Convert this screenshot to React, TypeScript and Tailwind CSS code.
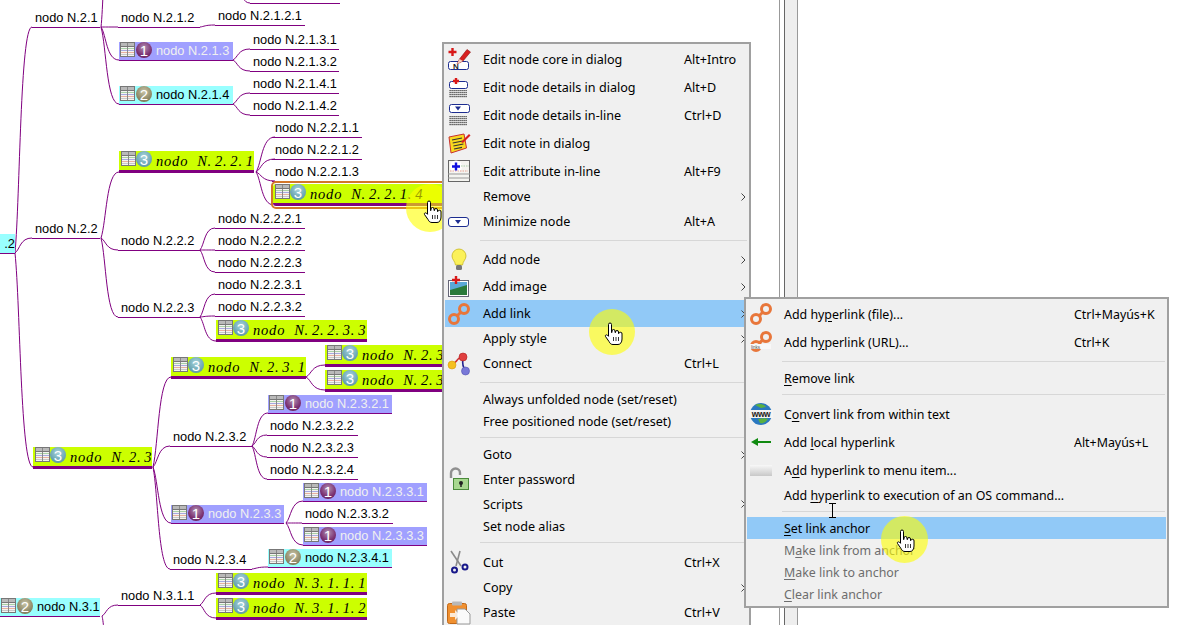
import React from 'react'

type Kind = 'plain' | 'blue' | 'cyan' | 'lime'
type MapNode = { x: number; y: number; w: number; text: string; kind: Kind }

// y is the top of the underline of each node
const nodes: MapNode[] = [
  { x: 250, y: 3, w: 90, text: '', kind: 'plain' },
  { x: 32, y: 27, w: 68, text: 'nodo N.2.1', kind: 'plain' },
  { x: 118, y: 27, w: 82, text: 'nodo N.2.1.2', kind: 'plain' },
  { x: 215, y: 25, w: 90, text: 'nodo N.2.1.2.1', kind: 'plain' },
  { x: 119, y: 60, w: 114, text: 'nodo N.2.1.3', kind: 'blue' },
  { x: 250, y: 49, w: 89, text: 'nodo N.2.1.3.1', kind: 'plain' },
  { x: 250, y: 71, w: 89, text: 'nodo N.2.1.3.2', kind: 'plain' },
  { x: 119, y: 104, w: 114, text: 'nodo N.2.1.4', kind: 'cyan' },
  { x: 250, y: 93, w: 89, text: 'nodo N.2.1.4.1', kind: 'plain' },
  { x: 250, y: 115, w: 89, text: 'nodo N.2.1.4.2', kind: 'plain' },
  { x: 119, y: 170, w: 135, text: 'nodo N. 2. 2. 1', kind: 'lime' },
  { x: 272, y: 137, w: 90, text: 'nodo N.2.2.1.1', kind: 'plain' },
  { x: 272, y: 159, w: 90, text: 'nodo N.2.2.1.2', kind: 'plain' },
  { x: 272, y: 181, w: 90, text: 'nodo N.2.2.1.3', kind: 'plain' },
  { x: 32, y: 238, w: 68, text: 'nodo N.2.2', kind: 'plain' },
  { x: 118, y: 250, w: 82, text: 'nodo N.2.2.2', kind: 'plain' },
  { x: 215, y: 228, w: 90, text: 'nodo N.2.2.2.1', kind: 'plain' },
  { x: 215, y: 250, w: 90, text: 'nodo N.2.2.2.2', kind: 'plain' },
  { x: 215, y: 272, w: 90, text: 'nodo N.2.2.2.3', kind: 'plain' },
  { x: 118, y: 317, w: 82, text: 'nodo N.2.2.3', kind: 'plain' },
  { x: 215, y: 294, w: 90, text: 'nodo N.2.2.3.1', kind: 'plain' },
  { x: 215, y: 316, w: 90, text: 'nodo N.2.2.3.2', kind: 'plain' },
  { x: 216, y: 339, w: 151, text: 'nodo N. 2. 2. 3. 3', kind: 'lime' },
  { x: 171, y: 376, w: 135, text: 'nodo N. 2. 3. 1', kind: 'lime' },
  { x: 325, y: 364, w: 151, text: 'nodo N. 2. 3. 1. 1', kind: 'lime' },
  { x: 325, y: 389, w: 151, text: 'nodo N. 2. 3. 1. 2', kind: 'lime' },
  { x: 33, y: 466, w: 119, text: 'nodo N. 2. 3', kind: 'lime' },
  { x: 170, y: 446, w: 82, text: 'nodo N.2.3.2', kind: 'plain' },
  { x: 268, y: 413, w: 124, text: 'nodo N.2.3.2.1', kind: 'blue' },
  { x: 267, y: 435, w: 91, text: 'nodo N.2.3.2.2', kind: 'plain' },
  { x: 267, y: 457, w: 91, text: 'nodo N.2.3.2.3', kind: 'plain' },
  { x: 267, y: 479, w: 91, text: 'nodo N.2.3.2.4', kind: 'plain' },
  { x: 171, y: 523, w: 113, text: 'nodo N.2.3.3', kind: 'blue' },
  { x: 303, y: 501, w: 124, text: 'nodo N.2.3.3.1', kind: 'blue' },
  { x: 302, y: 523, w: 91, text: 'nodo N.2.3.3.2', kind: 'plain' },
  { x: 303, y: 545, w: 124, text: 'nodo N.2.3.3.3', kind: 'blue' },
  { x: 170, y: 569, w: 82, text: 'nodo N.2.3.4', kind: 'plain' },
  { x: 268, y: 567, w: 124, text: 'nodo N.2.3.4.1', kind: 'cyan' },
  { x: 0, y: 616, w: 100, text: 'nodo N.3.1', kind: 'cyan' },
  { x: 118, y: 605, w: 82, text: 'nodo N.3.1.1', kind: 'plain' },
  { x: 216, y: 592, w: 151, text: 'nodo N. 3. 1. 1. 1', kind: 'lime' },
  { x: 216, y: 617, w: 151, text: 'nodo N. 3. 1. 1. 2', kind: 'lime' },
]

const edges: number[][] = [
  [15, 253, 32, 27], [15, 253, 32, 238], [15, 253, 33, 467],
  [101, 27, 108, -40], [101, 27, 118, 27], [101, 27, 119, 60], [101, 27, 119, 104],
  [240, -8, 250, 3],
  [200, 27, 215, 25],
  [233, 60, 250, 49], [233, 60, 250, 71],
  [233, 104, 250, 93], [233, 104, 250, 115],
  [101, 238, 119, 172], [101, 238, 118, 250], [101, 238, 118, 317],
  [256, 172, 275, 137], [256, 172, 275, 159], [256, 172, 275, 181], [256, 172, 274, 205],
  [200, 250, 215, 228], [200, 250, 215, 250], [200, 250, 215, 272],
  [200, 317, 215, 294], [200, 317, 215, 316], [200, 317, 216, 341],
  [153, 467, 171, 377], [153, 467, 170, 446], [153, 467, 171, 523], [153, 467, 170, 569],
  [306, 377, 325, 365], [306, 377, 325, 390],
  [252, 446, 268, 413], [252, 446, 267, 435], [252, 446, 267, 457], [252, 446, 267, 479],
  [286, 523, 303, 501], [286, 523, 302, 523], [286, 523, 303, 545],
  [252, 569, 268, 567],
  [102, 616, 118, 605], [102, 616, 108, 640],
  [200, 605, 216, 593], [200, 605, 216, 618],
]

const TableIcon = () => (
  <svg width="15" height="15" viewBox="0 0 15 15" className="shrink-0">
    <rect x="0.5" y="0.5" width="14" height="14" fill="#f4f4f0" stroke="#777" />
    <rect x="1" y="1" width="13" height="3" fill="#b9b9b9" />
    <path d="M1 6.5h13" stroke="#a8d0a8" />
    <path d="M1 8.5h13" stroke="#a8a8e0" />
    <path d="M1 10.5h13" stroke="#e8b0a0" />
    <path d="M1 12.5h13" stroke="#c8c8c8" />
    <path d="M7.5 1v13" stroke="#888" />
    <path d="M1 4.5h13" stroke="#777" />
  </svg>
)

const Badge = ({ n }: { n: number }) => {
  const color =
    n === 1
      ? 'bg-[radial-gradient(circle_at_50%_35%,#b090b4,#7a2f70_60%,#5c1f58)]'
      : n === 2
        ? 'bg-[radial-gradient(circle_at_50%_35%,#c8c4a8,#8f8a68_60%,#6e6a4c)]'
        : 'bg-[radial-gradient(circle_at_50%_35%,#a8d4dc,#6ca6b4_60%,#4c8a98)]'
  return (
    <span className={`flex h-[16px] w-[16px] shrink-0 items-center justify-center rounded-full text-[15px] leading-none text-white font-['Liberation_Sans',sans-serif] ${color}`}>
      {n}
    </span>
  )
}

const NodeLabel = ({ kind, text }: { kind: Kind; text: string }) => {
  if (kind === 'lime') {
    // "nodo" stands further from the rest of the label than the numbers do from each other
    const [head, ...rest] = text.split(' ')
    return (
      <div className="flex h-[19px] items-start overflow-hidden whitespace-nowrap bg-[#ccff00] pl-[2px]">
        <TableIcon />
        <Badge n={3} />
        <span className="ml-[4px] mt-[1px] font-['Liberation_Serif',serif] text-[14.5px] italic leading-[18px] tracking-[0.8px] [word-spacing:-1.5px] text-black">
          <span className="mr-[6px]">{head}</span> {rest.join(' ')}
        </span>
      </div>
    )
  }
  const blue = kind === 'blue'
  return (
    <div className={`flex items-start gap-[1px] pl-[1px] h-[18px] overflow-hidden whitespace-nowrap ${blue ? 'bg-[#a0a0ff]' : 'bg-[#99ffff]'}`}>
      <TableIcon />
      <Badge n={blue ? 1 : 2} />
      <span className={`ml-[3px] font-['Liberation_Sans',sans-serif] text-[12.8px] leading-[18px] ${blue ? 'text-[#f0f0f0]' : 'text-black'}`}>{text}</span>
    </div>
  )
}

const MapNodeBox = ({ node }: { node: MapNode }) => {
  const { x, y, w, text, kind } = node
  const thick = kind === 'lime'
  // the box ends on the underline, so it is placed by its bottom edge
  const bottom = 625 - y - (thick ? 3 : 1)
  return (
    <div className="absolute" style={{ left: x, bottom, width: w }}>
      {kind === 'plain' ? (
        <div className="h-[19px] whitespace-nowrap pl-[3px] font-['Liberation_Sans',sans-serif] text-[12.8px] leading-[19px] text-black">{text}</div>
      ) : (
        <NodeLabel kind={kind} text={text} />
      )}
      <div className={thick ? 'h-[3px] bg-[#800080]' : 'h-[1px] bg-[#800080]'} />
    </div>
  )
}

const Canvas = () => (
  <div className="relative h-[625px] w-[779px] shrink-0 overflow-hidden bg-white">
    <svg width="779" height="625" className="absolute inset-0">
      {edges.map(([a, b, c, d], i) => {
        const dx = c - a
        const dy = d - b
        return (
          <path
            key={i}
            d={`M${a} ${b}C${a + dx * 0.3} ${b + dy * 0.25} ${a + dx * 0.3} ${d} ${c} ${d}`}
            fill="none"
            stroke="#800080"
            strokeWidth="1"
          />
        )
      })}
    </svg>
    {/* cut off end of nodo N.2 at the left edge */}
    <div className="absolute left-0 top-[234px] h-[19px] w-[15px] bg-[#99ffff] text-right font-['Liberation_Sans',sans-serif] text-[12.8px] leading-[19px] text-black">.2</div>
    <div className="absolute left-0 top-[253px] h-[1px] w-[15px] bg-[#800080]" />
    {nodes.map((n) => (
      <MapNodeBox key={n.text + n.y + n.x} node={n} />
    ))}
    {/* selected node */}
    <div className="absolute left-[271px] top-[181px] h-[28px] w-[190px] rounded-[5px] border-2 border-[#d2772a] bg-white pt-[1px]">
      <div className="overflow-hidden rounded-l-[3px]">
        <NodeLabel kind="lime" text="nodo N. 2. 2. 1. 4" />
        <div className="h-[3px] bg-[#800080]" />
      </div>
    </div>
  </div>
)

// ---- menu icons ----
const PlusMark = ({ x, y, s = 3 }: { x: number; y: number; s?: number }) => (
  <path d={`M${x - s} ${y}h${s * 2}M${x} ${y - s}v${s * 2}`} stroke="#d81818" strokeWidth="2.4" />
)
const Dots = ({ y, rows }: { y: number; rows: number }) => (
  <g fill="#333">
    {Array.from({ length: rows }).flatMap((_, r) =>
      Array.from({ length: 9 }).map((_, c) => <rect key={`${r}-${c}`} x={2.5 + c * 2} y={y + r * 2} width="1.2" height="1.2" />),
    )}
  </g>
)

const IconEditCore = () => (
  <svg width="24" height="24" viewBox="0 0 24 24">
    <rect x="1.5" y="14.5" width="20" height="8" rx="2" fill="#fff" stroke="#1c2c90" />
    <text x="6" y="22" fontSize="8" fontWeight="700" fontFamily="Liberation Sans" fill="#222">N</text>
    <PlusMark x={5.5} y={5} s={4} />
    <path d="M10 17l2.5-5L20 2.5l3.5 2.5L16 14z" fill="#d82020" stroke="#8a1010" strokeWidth="0.6" />
    <path d="M10 17l2.5-5 3.5 2z" fill="#f0d0c0" />
  </svg>
)
const IconDetailsDialog = () => (
  <svg width="24" height="24" viewBox="0 0 24 24">
    <rect x="2.5" y="6.5" width="18" height="7" rx="2" fill="#fff" stroke="#1c2c90" />
    <PlusMark x={9} y={6} />
    <Dots y={15} rows={4} />
  </svg>
)
const IconDetailsInline = () => (
  <svg width="24" height="24" viewBox="0 0 24 24">
    <rect x="2.5" y="1.5" width="20" height="8" rx="2" fill="#fff" stroke="#1c2c90" />
    <path d="M8 3.5h6l-3 4z" fill="#1c2c90" />
    <Dots y={13} rows={5} />
  </svg>
)
const IconNote = () => (
  <svg width="24" height="24" viewBox="0 0 24 24">
    <path d="M2 6l15-3 2.5 14L4 22z" fill="#f8d820" stroke="#c83030" />
    <path d="M5 9l10-2M5.7 12l10-2M6.4 15l10-2M7 18l8-1.6" stroke="#333" strokeWidth="1.2" />
    <path d="M14 11L22 3l1.5 1.5L16 12z" fill="#d82020" />
  </svg>
)
const IconAttr = () => (
  <svg width="24" height="24" viewBox="0 0 24 24">
    <rect x="1.5" y="1.5" width="21" height="21" fill="#f4f4f0" stroke="#666" />
    <path d="M1 15h22M1 19h22" stroke="#999" />
    <circle cx="9" cy="7.5" r="6" fill="#fff" />
    <path d="M14 7h8" stroke="#a8d0a8" strokeDasharray="1.5 1" />
    <path d="M3 12h18" stroke="#e8a090" strokeDasharray="1.5 1" />
    <path d="M5 7.5h8M9 3.5v8" stroke="#1010e0" strokeWidth="2.4" />
  </svg>
)
const IconMinimize = () => (
  <svg width="24" height="24" viewBox="0 0 24 24">
    <rect x="1.5" y="7.5" width="20" height="9" rx="2.5" fill="#fff" stroke="#1c2c90" />
    <path d="M8 10h6l-3 4z" fill="#1c2c90" />
  </svg>
)
const IconBulb = () => (
  <svg width="24" height="24" viewBox="0 0 24 24">
    <path d="M12 1a7 7 0 0 0-7 7c0 3.5 3 5 3.5 9h7c.5-4 3.500-5.500 3.500-9a7 7 0 0 0-7-7z" fill="#fbf15a" stroke="#c8b820" strokeWidth="0.8" />
    <rect x="9" y="17" width="6" height="5" rx="1.5" fill="#777" />
  </svg>
)
const IconImage = () => (
  <svg width="24" height="24" viewBox="0 0 24 24">
    <rect x="1.5" y="5.5" width="20" height="16" fill="#fff" stroke="#667" />
    <path d="M3 7h17v8H3z" fill="#5aa8d8" />
    <path d="M3 15l7-2 10-3v10H3z" fill="#2a7a3a" />
    <PlusMark x={9} y={5} s={4} />
  </svg>
)
const IconLink = () => (
  <svg width="24" height="24" viewBox="0 0 24 24" fill="none" stroke="#e8763a" strokeWidth="3">
    <circle cx="17" cy="7" r="4.500" />
    <circle cx="7" cy="17" r="4.500" />
    <path d="M10 14l4-4" />
  </svg>
)
const IconLinkUrl = () => (
  <svg width="24" height="24" viewBox="0 0 24 24" fill="none" stroke="#e8763a" strokeWidth="3">
    <circle cx="17" cy="7" r="4.500" />
    <circle cx="7" cy="16" r="4.500" />
    <path d="M10 13l4-3" />
    <rect x="1" y="14" width="21" height="5" fill="#f8f8f8" stroke="none" />
    <text x="2" y="18.500" fontSize="4.500" fill="#555" stroke="none" fontFamily="Liberation Sans">links</text>
  </svg>
)
const IconConnect = () => (
  <svg width="24" height="24" viewBox="0 0 24 24">
    <path d="M5 12c5 0 4-7 11-7" stroke="#d03030" fill="none" strokeWidth="1.6" />
    <path d="M16 6c-1 6 0 10 3 13" stroke="#202090" fill="none" strokeWidth="1.6" />
    <circle cx="5" cy="13" r="4" fill="#f4c020" stroke="#d89810" strokeWidth="0.6" />
    <circle cx="16" cy="5" r="4" fill="#e04040" stroke="#b02020" strokeWidth="0.6" />
    <circle cx="18.500" cy="19" r="4" fill="#7878d8" stroke="#5050b0" strokeWidth="0.6" />
  </svg>
)
const IconLock = () => (
  <svg width="24" height="24" viewBox="0 0 24 24">
    <path d="M4 11V6a4.500 4.500 0 0 1 9 0v2" fill="none" stroke="#909090" strokeWidth="2.400" />
    <rect x="6.500" y="11.500" width="15" height="11" fill="#a8d890" stroke="#4a8a3a" />
    <circle cx="14" cy="16" r="2" fill="#222" />
    <path d="M14 16v4" stroke="#222" strokeWidth="1.500" />
  </svg>
)
const IconCut = () => (
  <svg width="24" height="24" viewBox="0 0 24 24" fill="none">
    <path d="M4 1l10 15" stroke="#8a8a8a" strokeWidth="1.600" />
    <path d="M13 1l-4 15" stroke="#8a8a8a" strokeWidth="1.600" />
    <circle cx="7.500" cy="20" r="2.500" stroke="#18188a" strokeWidth="2" />
    <circle cx="18" cy="17" r="2.500" stroke="#18188a" strokeWidth="2" />
  </svg>
)
const IconPaste = () => (
  <svg width="24" height="24" viewBox="0 0 24 24">
    <rect x="0.500" y="2.500" width="19" height="20" rx="2" fill="#f09030" stroke="#c06818" />
    <rect x="5" y="0.500" width="10" height="4" rx="1" fill="#b8b8b8" />
    <path d="M10 8h8l5 5v10H10z" fill="#fafafa" stroke="#999" />
    <path d="M3 12h5v-3l5 5-5 5v-3H3z" fill="#fff" opacity="0.8" />
  </svg>
)
const IconGlobe = () => (
  <svg width="24" height="24" viewBox="0 0 24 24">
    <circle cx="12" cy="12" r="11" fill="#2a78c0" />
    <path d="M6 3c4-2 9-1 11 2l-5 1zM9 17c4-1 8-1 10 0-2 3-5 5-8 4z" fill="#5ab040" />
    <rect x="0" y="8" width="24" height="8" fill="#f4f4f4" />
    <text x="12" y="15" fontSize="8.500" fontWeight="700" fontFamily="Liberation Sans" textAnchor="middle" fill="#222" letterSpacing="-0.400">www</text>
  </svg>
)
const IconArrow = () => (
  <svg width="24" height="24" viewBox="0 0 24 24">
    <path d="M2 12l7-4v3h13v2H9v3z" fill="#108a10" />
  </svg>
)
const IconBar = () => (
  <svg width="24" height="24" viewBox="0 0 24 24">
    <defs>
      <linearGradient id="bar" x1="0" y1="0" x2="0" y2="1">
        <stop offset="0" stopColor="#f8f8f8" />
        <stop offset="1" stopColor="#c8c8c8" />
      </linearGradient>
    </defs>
    <rect x="1" y="7" width="22" height="11" fill="url(#bar)" />
  </svg>
)

type Item = { label: React.ReactNode; h: string; icon?: React.ReactNode; keys?: string; arrow?: boolean; active?: boolean; off?: boolean; low?: boolean }
type Sep = { sep: string }

const mainItems: (Item | Sep)[] = [
  { label: 'Edit node core in dialog', h: 'h-[28px]', icon: <IconEditCore />, keys: 'Alt+Intro', low: true },
  { label: 'Edit node details in dialog', h: 'h-[28px]', icon: <IconDetailsDialog />, keys: 'Alt+D', low: true },
  { label: 'Edit node details in-line', h: 'h-[28px]', icon: <IconDetailsInline />, keys: 'Ctrl+D', low: true },
  { label: 'Edit note in dialog', h: 'h-[28px]', icon: <IconNote />, low: true },
  { label: 'Edit attribute in-line', h: 'h-[28px]', icon: <IconAttr />, keys: 'Alt+F9', low: true },
  { label: 'Remove', h: 'h-[24px]', arrow: true },
  { label: 'Minimize node', h: 'h-[25px]', icon: <IconMinimize />, keys: 'Alt+A', low: true },
  { sep: 'h-[12px]' },
  { label: 'Add node', h: 'h-[27px]', icon: <IconBulb />, arrow: true, low: true },
  { label: 'Add image', h: 'h-[27px]', icon: <IconImage />, arrow: true, low: true },
  { label: 'Add link', h: 'h-[27px]', icon: <IconLink />, arrow: true, active: true, low: true },
  { label: 'Apply style', h: 'h-[24px]', arrow: true },
  { label: 'Connect', h: 'h-[25px]', icon: <IconConnect />, keys: 'Ctrl+L', low: true },
  { sep: 'h-[12px]' },
  { label: 'Always unfolded node (set/reset)', h: 'h-[22px]', low: true },
  { label: 'Free positioned node (set/reset)', h: 'h-[22px]', low: true },
  { sep: 'h-[11px]' },
  { label: 'Goto', h: 'h-[23px]', arrow: true, low: true },
  { label: 'Enter password', h: 'h-[26px]', icon: <IconLock />, low: true },
  { label: 'Scripts', h: 'h-[24px]', arrow: true, low: true },
  { label: 'Set node alias', h: 'h-[21px]', low: true },
  { sep: 'h-[11px]' },
  { label: 'Cut', h: 'h-[28px]', icon: <IconCut />, keys: 'Ctrl+X', low: true },
  { label: 'Copy', h: 'h-[23px]', arrow: true, low: true },
  { label: 'Paste', h: 'h-[28px]', icon: <IconPaste />, keys: 'Ctrl+V' },
]

const U = ({ children }: { children: React.ReactNode }) => <span className="underline underline-offset-2">{children}</span>

const subItems: (Item | Sep)[] = [
  { label: <>Add hy<U>p</U>erlink (file)...</>, h: 'h-[28px]', icon: <IconLink />, keys: 'Ctrl+Mayús+K', low: true },
  { label: <>Add h<U>y</U>perlink (URL)...</>, h: 'h-[28px]', icon: <IconLinkUrl />, keys: 'Ctrl+K', low: true },
  { sep: 'h-[11px]' },
  { label: <><U>R</U>emove link</>, h: 'h-[22px]', low: true },
  { sep: 'h-[11px]' },
  { label: <>C<U>o</U>nvert link from within text</>, h: 'h-[28px]', icon: <IconGlobe />, low: true },
  { label: <>Add <U>l</U>ocal hyperlink</>, h: 'h-[28px]', icon: <IconArrow />, keys: 'Alt+Mayús+L', low: true },
  { label: <>A<U>d</U>d hyperlink to menu item...</>, h: 'h-[28px]', icon: <IconBar />, low: true },
  { label: <>Add <U>h</U>yperlink to execution of an OS command...</>, h: 'h-[22px]', low: true },
  { sep: 'h-[11px]' },
  { label: <><U>S</U>et link anchor</>, h: 'h-[22px]', active: true, low: true },
  { label: <>M<U>a</U>ke link from anchor</>, h: 'h-[22px]', off: true, low: true },
  { label: <><U>M</U>ake link to anchor</>, h: 'h-[22px]', off: true, low: true },
  { label: <><U>C</U>lear link anchor</>, h: 'h-[22px]', off: true, low: true },
]

const Chevron = () => (
  <svg width="5" height="8" viewBox="0 0 5 8" fill="none" stroke="#444">
    <path d="M0.5 0.500l3.500 3.500-3.500 3.500" />
  </svg>
)

const MenuRows = ({ items, labelW }: { items: (Item | Sep)[]; labelW: string }) => (
  <>
    {items.map((it, i) =>
      'sep' in it ? (
        <div key={i} className={`flex items-center pl-[35px] pr-[1px] ${it.sep}`}>
          <div className="h-[1px] w-full bg-[#d7d7d7]" />
        </div>
      ) : (
        <div key={i} className={`flex items-center whitespace-nowrap ${it.h} ${it.active ? 'bg-[#91c9f7]' : ''} ${it.off ? 'text-[#6d6d6d]' : 'text-black'}`}>
          <div className="flex w-[36px] shrink-0 justify-start pl-[2px]">{it.icon}</div>
          <div className={`flex items-center ${it.low ? 'pt-[2px]' : ''}`}>
            <div className={`pl-[2px] ${labelW}`}>{it.label}</div>
            {it.keys && <div>{it.keys}</div>}
          </div>
          {it.arrow && <div className="ml-auto pr-[2px]"><Chevron /></div>}
        </div>
      ),
    )}
  </>
)

const Hand = ({ className }: { className: string }) => (
  <svg width="19" height="24" viewBox="0 0 19 24" className={`absolute ${className}`}>
    <path
      d="M4.500 2.500a1.500 1.500 0 0 1 3 0v8h.5V9a1.500 1.500 0 0 1 3 0v1.500h.5V10a1.500 1.500 0 0 1 3 0v1.500h.5a1.500 1.500 0 0 1 3 .5v5c0 3-1.500 5.500-4 5.500H9c-2 0-3-1-4-3l-3.500-5c-.7-1.200.8-2.300 2-1.200l1 1z"
      fill="#fff"
      stroke="#000"
      strokeWidth="1"
    />
    <path d="M9.500 15v4M12 15v4M14.500 15v4" stroke="#000" strokeWidth="0.800" />
  </svg>
)

export default function App() {
  return (
    <div className="relative flex h-[625px] w-[1187px] overflow-hidden bg-white">
      <Canvas />
      {/* split pane handle between the map and the side panel */}
      <div className="h-full w-[1px] bg-[#999]" />
      <div className="h-full w-[4px] bg-white" />
      <div className="h-full w-[1px] bg-[#666]" />
      <div className="h-full w-[12px] bg-[#eee]" />
      <div className="h-full w-[1px] bg-[#999]" />
      <div className="h-full flex-1 bg-white" />

      <div className="absolute left-[406px] top-[184px] h-[48px] w-[48px] rounded-full bg-[#ffff00]/60" />
      <Hand className="left-[423px] top-[200px]" />

      <div className="absolute left-[442px] top-[42px] h-[600px] w-[309px] border-x-2 border-t-2 border-[#a0a0a0] bg-[#f0f0f0] px-[1px] pt-[1px] font-['Noto_Sans',sans-serif] text-[12.6px]">
        <MenuRows items={mainItems} labelW="w-[203px]" />
      </div>

      <div className="absolute left-[589px] top-[309px] h-[46px] w-[46px] rounded-full bg-[#ffff00]/60" />
      <Hand className="left-[604px] top-[322px]" />

      <div className="absolute left-[744px] top-[297px] h-[311px] w-[425px] border-2 border-[#a0a0a0] bg-[#f0f0f0] px-[1px] pt-[1px] font-['Noto_Sans',sans-serif] text-[12.4px]">
        <MenuRows items={subItems} labelW="w-[292px] -ml-[1px]" />
      </div>

      {/* text caret cursor above the submenu row */}
      <div className="absolute left-[829px] top-[503px] flex h-[15px] w-[7px] flex-col items-center justify-between">
        <div className="h-[1px] w-[7px] bg-black" />
        <div className="h-[13px] w-[1px] bg-black" />
        <div className="h-[1px] w-[7px] bg-black" />
      </div>

      <div className="absolute left-[881px] top-[516px] h-[47px] w-[47px] rounded-full bg-[#ffff00]/60" />
      <Hand className="left-[896px] top-[529px]" />
    </div>
  )
}
